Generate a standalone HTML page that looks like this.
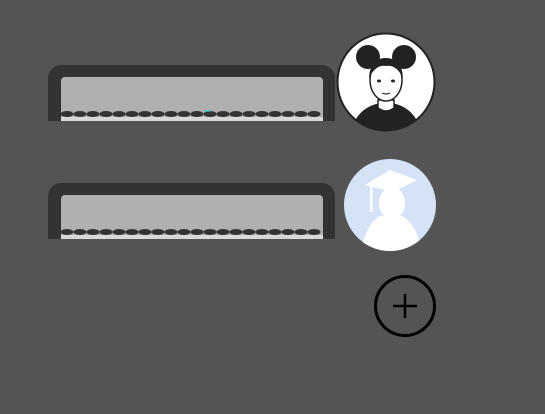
<!DOCTYPE html>
<html><head><style>
body{margin:0;width:545px;height:414px;background:#545454;overflow:hidden;position:relative}
.card{position:absolute;left:48px;width:287px;height:56px;background:#333;border-radius:13px 13px 0 0}
.in{position:absolute;left:13px;top:12px;width:262px;height:44px;background:#b0b0b0;border-radius:4px 4px 0 0;overflow:hidden}
.strip{position:absolute;left:0;bottom:0;width:100%;height:4px;background:#d8d8d8}
</style></head><body>
<div class="card" style="top:65px"><div class="in"><div class="strip"></div>
<svg width="262" height="44" style="position:absolute;left:0;top:0"><g fill="#333">
<ellipse cx="6" cy="37" rx="6.5" ry="3"/><ellipse cx="19" cy="37" rx="6.5" ry="3"/><ellipse cx="32" cy="37" rx="6.5" ry="3"/><ellipse cx="45" cy="37" rx="6.5" ry="3"/><ellipse cx="58" cy="37" rx="6.5" ry="3"/><ellipse cx="71" cy="37" rx="6.5" ry="3"/><ellipse cx="84" cy="37" rx="6.5" ry="3"/><ellipse cx="97" cy="37" rx="6.5" ry="3"/><ellipse cx="110" cy="37" rx="6.5" ry="3"/><ellipse cx="123" cy="37" rx="6.5" ry="3"/><ellipse cx="136" cy="37" rx="6.5" ry="3"/><ellipse cx="149" cy="37" rx="6.5" ry="3"/><ellipse cx="162" cy="37" rx="6.5" ry="3"/><ellipse cx="175" cy="37" rx="6.5" ry="3"/><ellipse cx="188" cy="37" rx="6.5" ry="3"/><ellipse cx="201" cy="37" rx="6.5" ry="3"/><ellipse cx="214" cy="37" rx="6.5" ry="3"/><ellipse cx="227" cy="37" rx="6.5" ry="3"/><ellipse cx="240" cy="37" rx="6.5" ry="3"/><ellipse cx="253" cy="37" rx="6.5" ry="3"/></g>
<path d="M142 33 L152 34 L146 35Z" fill="#2cc"/></svg></div></div>
<div class="card" style="top:183px"><div class="in"><div class="strip"></div>
<svg width="262" height="44" style="position:absolute;left:0;top:0"><g fill="#333">
<ellipse cx="6" cy="37" rx="6.5" ry="3"/><ellipse cx="19" cy="37" rx="6.5" ry="3"/><ellipse cx="32" cy="37" rx="6.5" ry="3"/><ellipse cx="45" cy="37" rx="6.5" ry="3"/><ellipse cx="58" cy="37" rx="6.5" ry="3"/><ellipse cx="71" cy="37" rx="6.5" ry="3"/><ellipse cx="84" cy="37" rx="6.5" ry="3"/><ellipse cx="97" cy="37" rx="6.5" ry="3"/><ellipse cx="110" cy="37" rx="6.5" ry="3"/><ellipse cx="123" cy="37" rx="6.5" ry="3"/><ellipse cx="136" cy="37" rx="6.5" ry="3"/><ellipse cx="149" cy="37" rx="6.5" ry="3"/><ellipse cx="162" cy="37" rx="6.5" ry="3"/><ellipse cx="175" cy="37" rx="6.5" ry="3"/><ellipse cx="188" cy="37" rx="6.5" ry="3"/><ellipse cx="201" cy="37" rx="6.5" ry="3"/><ellipse cx="214" cy="37" rx="6.5" ry="3"/><ellipse cx="227" cy="37" rx="6.5" ry="3"/><ellipse cx="240" cy="37" rx="6.5" ry="3"/><ellipse cx="253" cy="37" rx="6.5" ry="3"/></g></svg></div></div>
<svg width="545" height="414" style="position:absolute;left:0;top:0">
<defs><clipPath id="c1"><circle cx="386" cy="82" r="48"/></clipPath><clipPath id="c2"><circle cx="390" cy="205" r="46"/></clipPath></defs>
<circle cx="386" cy="82" r="48.5" fill="#fff" stroke="#222" stroke-width="2"/>
<g clip-path="url(#c1)">
<path d="M350 135 Q355 110 376 104 L396 104 Q417 110 422 135Z" fill="#222"/>
<path d="M378 100 L378 108 Q386 114 394 108 L394 100Z" fill="#fff" stroke="#222" stroke-width="1.5"/>
<ellipse cx="386" cy="80" rx="16" ry="21" fill="#fff" stroke="#222" stroke-width="1.5"/>
<circle cx="368" cy="57" r="12" fill="#222"/><circle cx="404" cy="57" r="12" fill="#222"/>
<path d="M369 78 Q370 58 386 58 Q402 58 403 78 Q396 64 386 66 Q376 64 369 78Z" fill="#222"/>
<ellipse cx="379" cy="81" rx="2" ry="1.5" fill="#222"/><ellipse cx="393" cy="81" rx="2" ry="1.5" fill="#222"/>
<path d="M382 93 Q386 95 390 93" stroke="#222" stroke-width="1.2" fill="none"/>
</g>
<circle cx="390" cy="205" r="46" fill="#d6e2f5"/>
<g clip-path="url(#c2)" fill="#fff">
<path d="M365 185 L390 170 L417 180 L393 192Z"/>
<rect x="370" y="186" width="2.5" height="26"/>
<ellipse cx="392" cy="203" rx="13" ry="16"/>
<path d="M360 255 Q365 225 380 216 L402 216 Q418 225 422 255Z"/>
</g>
<circle cx="405" cy="306" r="29.5" fill="none" stroke="#000" stroke-width="3"/>
<path d="M405 294 V318 M393 306 H417" stroke="#000" stroke-width="2.5"/>
</svg>
</body></html>
